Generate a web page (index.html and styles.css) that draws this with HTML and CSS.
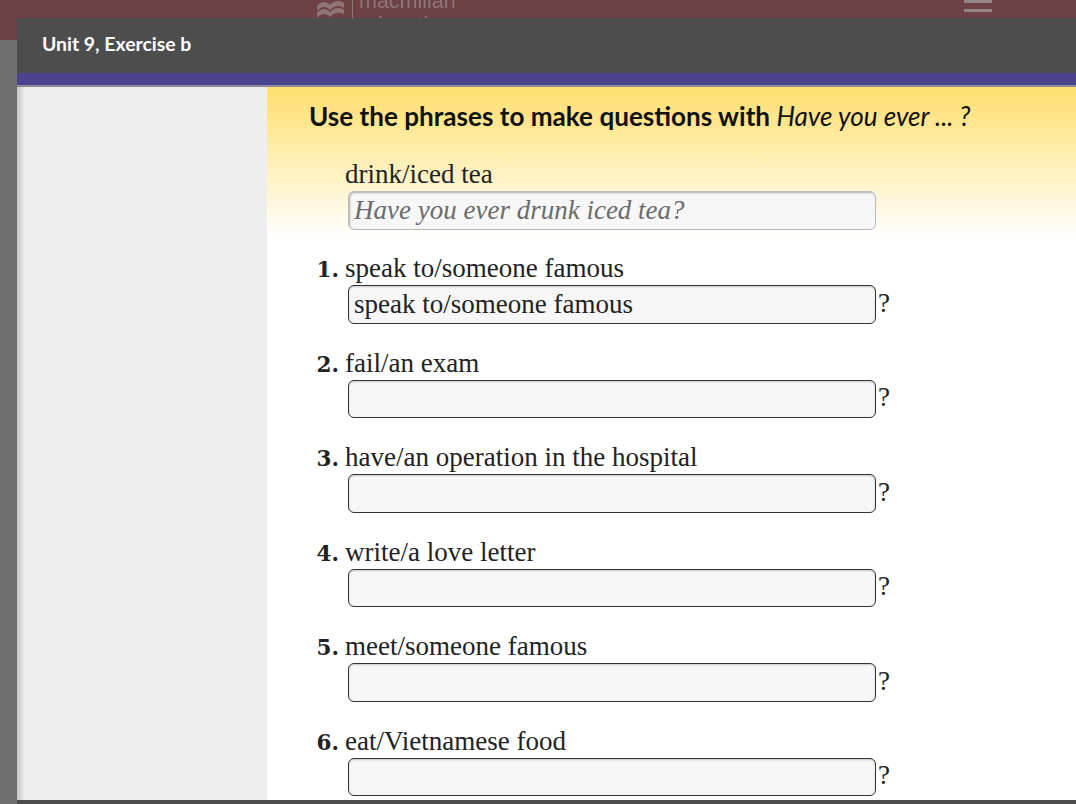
FILE: index.html
```html
<!DOCTYPE html>
<html>

<head>
    <title>Unit 9, Exercise b</title>
    <link rel="stylesheet" href="styles.css">
</head>

<body>

    <div id="topbar">
        <div id="logo">
            <svg width="27" height="18" viewBox="0 0 27 18">
                <path d="M0 6 C4 1 9 1 13 5 C17 0 23 0 27 3 L27 8 C23 5 17 5 13 10 C9 6 4 6 0 11 Z" fill="#8f7478"/>
                <path d="M0 13 C4 8 9 8 13 12 C17 7 23 7 27 10 L27 14 C23 12 17 12 13 17 C9 13 4 13 0 18 Z" fill="#8f7478"/>
            </svg>
            <span id="logo-line"></span>
            <span id="logo-text">macmillan<br>education</span>
        </div>
        <div id="menu-icon"><span></span><span></span><span></span></div>
    </div>

    <div id="modal">
        <div id="modal-title">Unit 9, Exercise b</div>
        <div id="modal-stripe"></div>
        <div id="modal-body">
            <div id="sidebar"></div>
            <div id="content">
                <div id="instructions">
                    <h1>Use the phrases to make questions with <em>Have you ever ... ?</em></h1>
                    <div class="item example">
                        <p class="phrase"><span class="num"></span>drink/iced tea</p>
                        <div class="answer">
                            <input type="text" class="textbox" placeholder="Have you ever drunk iced tea?" disabled>
                        </div>
                    </div>
                </div>

                <div class="item">
                    <p class="phrase"><span class="num">1.</span>speak to/someone famous</p>
                    <div class="answer">
                        <input type="text" class="textbox" value="speak to/someone famous"><span>?</span>
                    </div>
                </div>
                <div class="item">
                    <p class="phrase"><span class="num">2.</span>fail/an exam</p>
                    <div class="answer">
                        <input type="text" class="textbox"><span>?</span>
                    </div>
                </div>
                <div class="item">
                    <p class="phrase"><span class="num">3.</span>have/an operation in the hospital</p>
                    <div class="answer">
                        <input type="text" class="textbox"><span>?</span>
                    </div>
                </div>
                <div class="item">
                    <p class="phrase"><span class="num">4.</span>write/a love letter</p>
                    <div class="answer">
                        <input type="text" class="textbox"><span>?</span>
                    </div>
                </div>
                <div class="item">
                    <p class="phrase"><span class="num">5.</span>meet/someone famous</p>
                    <div class="answer">
                        <input type="text" class="textbox"><span>?</span>
                    </div>
                </div>
                <div class="item">
                    <p class="phrase"><span class="num">6.</span>eat/Vietnamese food</p>
                    <div class="answer">
                        <input type="text" class="textbox"><span>?</span>
                    </div>
                </div>
            </div>
        </div>
        <div id="modal-bottom"></div>
    </div>

</body>

</html>
```
FILE: styles.css
```css
html, body {
    height: 100%;
}

body {
    margin: 0;
    overflow: hidden;
    background-color: #6e6e6e;
    font-family: 'Liberation Serif', serif;
    color: #222;
}

#topbar {
    height: 40px;
    background-color: #6c4247;
    overflow: hidden;
    position: relative;
}

#logo {
    position: absolute;
    left: 317px;
    top: 0;
    display: flex;
    gap: 8px;
    filter: blur(0.6px);
}

#logo-line {
    width: 1px;
    height: 18px;
    background-color: #8f7478;
    margin-right: -2px;
}

#logo-text {
    font-family: 'Liberation Sans', sans-serif;
    font-size: 21.5px;
    line-height: 24px;
    margin-top: -11px;
    color: #8f7478;
}

#menu-icon {
    position: absolute;
    left: 964px;
    top: 0;
    width: 28px;
    filter: blur(0.6px);
}

#menu-icon span {
    display: block;
    height: 3px;
    margin-bottom: 6px;
    background-color: #978588;
}

#modal {
    position: absolute;
    left: 17px;
    top: 18px;
    right: 0;
    bottom: 0;
    display: flex;
    flex-direction: column;
    overflow: hidden;
}

#modal-title {
    height: 55px;
    flex-shrink: 0;
    padding-left: 25px;
    background-color: #4d4d4d;
    color: #fff;
    font-family: Lato, sans-serif;
    font-weight: bold;
    font-size: 19.4px;
    line-height: 52px;
}

#modal-stripe {
    height: 12px;
    flex-shrink: 0;
    background-color: #4a4390;
    border-bottom: 2px solid #8d8a9c;
}

#modal-body {
    flex: 1;
    display: flex;
    min-height: 0;
    overflow: hidden;
}

#sidebar {
    width: 250px;
    flex-shrink: 0;
    background: linear-gradient(to right, #c4c4c4, #eeeeee 8px);
}

#content {
    flex: 1;
    background-color: #fff;
}

#modal-bottom {
    height: 4px;
    flex-shrink: 0;
    background-color: #4d4d4d;
}

#instructions {
    height: 151px;
    padding-top: 14px;
    box-sizing: border-box;
    background: linear-gradient(to bottom, #ffdf6e, #ffffff);
}

h1 {
    margin: 0 0 28px 42px;
    font-family: Lato, sans-serif;
    font-size: 26.1px;
    line-height: 30px;
    font-weight: bold;
    color: #111;
}

h1 em {
    font-weight: normal;
}

.item {
    height: 94.5px;
    padding-top: 15px;
    box-sizing: border-box;
}

.example {
    height: auto;
    padding-top: 0;
}

.phrase {
    margin: 0;
    display: flex;
    align-items: baseline;
    font-size: 27px;
    line-height: 30px;
    height: 32px;
}

/* georgia style numbers: small and heavy */
.num {
    width: 72px;
    margin-right: 6px;
    text-align: right;
    font-family: 'DejaVu Serif', serif;
    font-size: 21.5px;
    font-weight: bold;
}

.answer {
    display: flex;
    align-items: center;
    margin-left: 81px;
    font-size: 27px;
}

.answer span {
    margin-left: 2px;
    margin-bottom: 2px;
}

.textbox {
    width: 528px;
    height: 38.5px;
    box-sizing: border-box;
    padding: 0 5px;
    border: 1px solid #333;
    border-radius: 6px;
    background-color: #f7f7f7;
    box-shadow: inset 0 1px 2px rgba(0, 0, 0, 0.2);
    font-family: 'Liberation Serif', serif;
    font-size: 27px;
    color: #222;
}

.textbox:disabled {
    border-color: #bbb;
    box-shadow: inset 1px 1px 2px rgba(0, 0, 0, 0.3);
}

.textbox::placeholder {
    font-style: italic;
    color: #6b6b6b;
    opacity: 1;
}
```
